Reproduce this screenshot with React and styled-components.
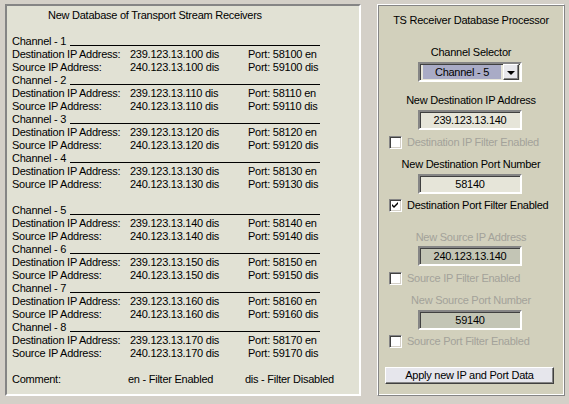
import React from 'react';
import styled, { createGlobalStyle } from 'styled-components';

const GlobalStyle = createGlobalStyle`
  html, body {
    margin: 0;
    padding: 0;
    background: #d4d0c8;
  }
  body {
    font-family: "Liberation Sans", Arial, sans-serif;
    font-size: 11px;
    letter-spacing: -0.25px;
    color: #000;
  }
`;

const Window = styled.div`
  display: flex;
  align-items: flex-start;
  gap: 16px;
  width: 569px;
  height: 404px;
  box-sizing: border-box;
  padding: 4px 4px 0 5px;
`;

const ListPanel = styled.div`
  width: 356px;
  height: 392px;
  box-sizing: border-box;
  background: #e1e1d4;
  border: 2px solid;
  border-color: #858585 #ffffff #ffffff #858585;
  padding: 3px 0 0 5px;
  line-height: 13px;
`;

const ListTitle = styled.div`
  margin-left: 36px;
  white-space: nowrap;
`;

const Blank = styled.div`
  height: 13px;
`;

const ChannelHead = styled.div`
  display: flex;
  width: 308px;
  height: 13px;
  white-space: nowrap;
`;

const HeadRule = styled.span`
  flex: 1;
  margin-left: 4px;
  height: 10px;
  border-bottom: 1px solid #000;
`;

const DataRow = styled.div`
  display: grid;
  grid-template-columns: ${p => p.$cols || '118px 118px 1fr'};
  height: 13px;
  white-space: nowrap;
`;

const SidePanel = styled.div`
  width: 188px;
  height: 392px;
  box-sizing: border-box;
  background: #d2d0bc;
  border: 1px solid;
  border-color: #ffffff #858585 #858585 #ffffff;
  box-shadow: inset 1px 1px 0 #858585, inset -1px -1px 0 #ffffff;
  display: flex;
  flex-direction: column;
  padding: 9px 0 0 0;
  line-height: 13px;
`;

const Label = styled.div`
  text-align: center;
  margin-top: ${p => p.$top || 0}px;
  color: ${p => (p.$disabled ? '#a3a29a' : '#000')};
  white-space: nowrap;
`;

const Field = styled.div`
  align-self: flex-start;
  margin: ${p => p.$top || 3}px 0 0 40px;
  width: 104px;
  height: 20px;
  box-sizing: border-box;
  border: 2px solid;
  border-color: #858585 #ffffff #ffffff #858585;
  box-shadow: inset 1px 1px 0 #404040;
  background: ${p => (p.$disabled ? '#c3c5b5' : '#e6e5d9')};
  display: flex;
  align-items: center;
  justify-content: center;
  line-height: 13px;
`;

const Combo = styled(Field)`
  justify-content: space-between;
  padding: 1px 1px 1px 3px;
  background: #e6e5d9;
`;

const ComboValue = styled.span`
  flex: 1;
  height: 14px;
  background: #a9abc6;
  text-align: center;
  line-height: 14px;
`;

const ComboButton = styled.span`
  width: 16px;
  height: 16px;
  box-sizing: border-box;
  margin-left: 2px;
  background: #e8e8ec;
  border: 1px solid;
  border-color: #ffffff #404040 #404040 #ffffff;
  box-shadow: inset -1px -1px 0 #858585;
  display: flex;
  align-items: center;
  justify-content: center;
`;

const Arrow = styled.span`
  width: 0;
  height: 0;
  border-left: 4px solid transparent;
  border-right: 4px solid transparent;
  border-top: 4px solid #000;
  margin-top: 1px;
`;

const CheckRow = styled.label`
  display: flex;
  align-items: center;
  gap: 5px;
  margin: ${p => p.$top || 6}px 0 0 11px;
  height: 13px;
  color: ${p => (p.$disabled ? '#a3a29a' : '#000')};
  white-space: nowrap;
`;

const Box = styled.span`
  width: 13px;
  height: 13px;
  box-sizing: border-box;
  border: 1px solid;
  border-color: #858585 #ffffff #ffffff #858585;
  box-shadow: inset 1px 1px 0 #404040, inset -1px -1px 0 #d4d0c8;
  background: #ffffff;
  display: flex;
  align-items: center;
  justify-content: center;
  flex: none;
`;

const ApplyButton = styled.div`
  margin: 19px 0 0 7px;
  width: 169px;
  height: 17px;
  box-sizing: border-box;
  background: #e6e6ec;
  border: 1px solid;
  border-color: #ffffff #404040 #404040 #ffffff;
  box-shadow: inset -1px -1px 0 #858585;
  text-align: center;
  line-height: 14px;
  white-space: nowrap;
`;

const Checkmark = () => (
  <svg width="7" height="7" viewBox="0 0 7 7">
    <path d="M0 2 L2 4 L6 0 L6 2 L2 6 L0 4 Z" fill="#000" />
  </svg>
);

const CheckBox = ({ checked, disabled, top, children }) => (
  <CheckRow $disabled={disabled} $top={top}>
    <Box>{checked && <Checkmark />}</Box>
    {children}
  </CheckRow>
);

const channels = [1, 2, 3, 4, 5, 6, 7, 8].map(n => ({
  n,
  dest: `239.123.13.${90 + n * 10}`,
  src: `240.123.13.${90 + n * 10}`,
  dport: 58090 + n * 10,
  sport: 59090 + n * 10,
}));

export default function App() {
  return (
    <>
      <GlobalStyle />
      <Window>
        <ListPanel>
          <ListTitle>New Database of Transport Stream Receivers</ListTitle>
          <Blank />
          {channels.map(c => (
            <React.Fragment key={c.n}>
              {c.n === 5 && <Blank />}
              <ChannelHead>
                Channel - {c.n}
                <HeadRule />
              </ChannelHead>
              <DataRow>
                <span>Destination IP Address:</span>
                <span>{c.dest} dis</span>
                <span>Port: {c.dport} en</span>
              </DataRow>
              <DataRow>
                <span>Source IP Address:</span>
                <span>{c.src} dis</span>
                <span>Port: {c.sport} dis</span>
              </DataRow>
            </React.Fragment>
          ))}
          <Blank />
          <DataRow $cols="116px 117px 1fr">
            <span>Comment:</span>
            <span>en - Filter Enabled</span>
            <span>dis - Filter Disabled</span>
          </DataRow>
        </ListPanel>

        <SidePanel>
          <Label>TS Receiver Database Processor</Label>
          <Label $top={19}>Channel Selector</Label>
          <Combo>
            <ComboValue>Channel - 5</ComboValue>
            <ComboButton><Arrow /></ComboButton>
          </Combo>
          <Label $top={12}>New Destination IP Address</Label>
          <Field>239.123.13.140</Field>
          <CheckBox disabled>Destination IP Filter Enabled</CheckBox>
          <Label $top={9}>New Destination Port Number</Label>
          <Field>58140</Field>
          <CheckBox checked top={5}>Destination Port Filter Enabled</CheckBox>
          <Label $top={19} $disabled>New Source IP Address</Label>
          <Field $disabled $top={2}>240.123.13.140</Field>
          <CheckBox disabled>Source IP Filter Enabled</CheckBox>
          <Label $top={9} $disabled>New Source Port Number</Label>
          <Field $disabled>59140</Field>
          <CheckBox disabled top={5}>Source Port Filter Enabled</CheckBox>
          <ApplyButton>Apply new IP and Port Data</ApplyButton>
        </SidePanel>
      </Window>
    </>
  );
}
